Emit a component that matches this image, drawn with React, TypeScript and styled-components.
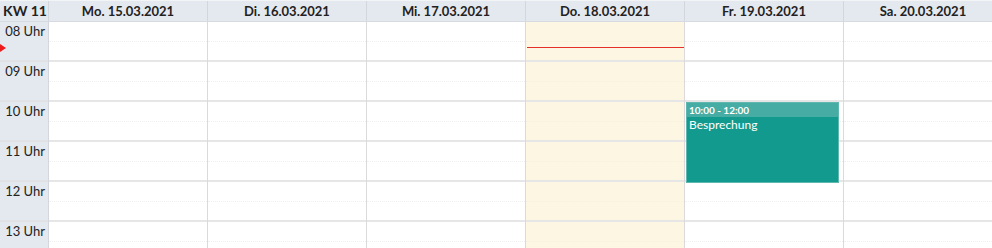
import styled, { createGlobalStyle } from "styled-components"

const GlobalStyle = createGlobalStyle`
    html, body {
        margin: 0;
        padding: 0;
        background: #fff;
        overflow: hidden;
    }
    body {
        font-family: Lato, "Liberation Sans", sans-serif;
        color: #222;
    }
`

const days = [
    "Mo. 15.03.2021",
    "Di. 16.03.2021",
    "Mi. 17.03.2021",
    "Do. 18.03.2021",
    "Fr. 19.03.2021",
    "Sa. 20.03.2021",
]

const hours = ["08", "09", "10", "11", "12", "13"]

const HOUR = 40

const App = () => {
    return (
        <Calendar>
            <GlobalStyle />
            <HeaderRow>
                <Corner>KW 11</Corner>
                {days.map((d) => (
                    <DayHead key={d}>{d}</DayHead>
                ))}
            </HeaderRow>
            <Body>
                <TimeColumn>
                    <NowMarker />
                    {hours.map((h) => (
                        <TimeSlot key={h}>{h} Uhr</TimeSlot>
                    ))}
                </TimeColumn>
                {days.map((d, i) => (
                    <DayColumn key={d} $today={i === 3}>
                        {hours.map((h) => (
                            <Slot key={h}>
                                <HalfLine />
                            </Slot>
                        ))}
                        {i === 3 && <NowLine />}
                        {i === 4 && (
                            <Event style={{ top: HOUR * 2, height: HOUR * 2 + 1 }}>
                                <EventTime>10:00 - 12:00</EventTime>
                                <EventTitle>Besprechung</EventTitle>
                            </Event>
                        )}
                    </DayColumn>
                ))}
            </Body>
        </Calendar>
    )
}

const Calendar = styled.div`
    width: 1003px;
    height: 248px;
    overflow: hidden;
`

const HeaderRow = styled.div`
    display: flex;
    height: 22px;
    box-sizing: border-box;
    border-top: 1px solid #f3f4f6;
    border-bottom: 1px solid #d7dbe1;
    background: #e4e8ef;
`

const Corner = styled.div`
    width: 49px;
    box-sizing: border-box;
    border-right: 1px solid #d3d7dd;
    font-size: 14px;
    font-weight: 700;
    line-height: 20px;
    text-align: center;
    padding-left: 2px;
`

const DayHead = styled.div`
    width: 159px;
    box-sizing: border-box;
    border-right: 1px solid #d3d7dd;
    font-size: 13px;
    font-weight: 700;
    line-height: 20px;
    text-align: center;
`

const Body = styled.div`
    display: flex;
`

const TimeColumn = styled.div`
    position: relative;
    width: 49px;
    box-sizing: border-box;
    background: #e4e8ef;
    border-right: 1px solid #d3d7dd;
`

const TimeSlot = styled.div`
    height: ${HOUR}px;
    box-sizing: border-box;
    border-bottom: 2px solid #dfe1e5;
    font-size: 13px;
    line-height: 16px;
    text-align: right;
    padding: 1px 3px 0 0;
`

const NowMarker = styled.div`
    position: absolute;
    left: 0;
    top: 22px;
    width: 0;
    height: 0;
    border-top: 4px solid transparent;
    border-bottom: 4px solid transparent;
    border-left: 6px solid #ee1c1c;
`

const DayColumn = styled.div<{ $today?: boolean }>`
    position: relative;
    width: 159px;
    flex-shrink: 0;
    box-sizing: border-box;
    border-right: 1px solid #dadada;
    background: ${(p) => (p.$today ? "#fcf6e2" : "#fff")};
`

const Slot = styled.div`
    height: ${HOUR}px;
    box-sizing: border-box;
    border-bottom: 2px solid #e6e6e6;
    padding-top: 19px;
`

const HalfLine = styled.div`
    border-top: 1px dotted #f0f0f0;
`

const NowLine = styled.div`
    position: absolute;
    left: 1px;
    right: 0;
    top: 25px;
    border-top: 1px solid #e5302a;
`

const Event = styled.div`
    position: absolute;
    left: 1px;
    width: 153px;
    box-sizing: border-box;
    border: 1px solid #5fb7b0;
    background: #129a8f;
    color: #fff;
`

const EventTime = styled.div`
    height: 14px;
    background: #47aca4;
    font-size: 10px;
    font-weight: 700;
    line-height: 14px;
    padding-left: 2px;
`

const EventTitle = styled.div`
    font-size: 12px;
    line-height: 15px;
    padding: 0 0 0 2px;
`

export default App
